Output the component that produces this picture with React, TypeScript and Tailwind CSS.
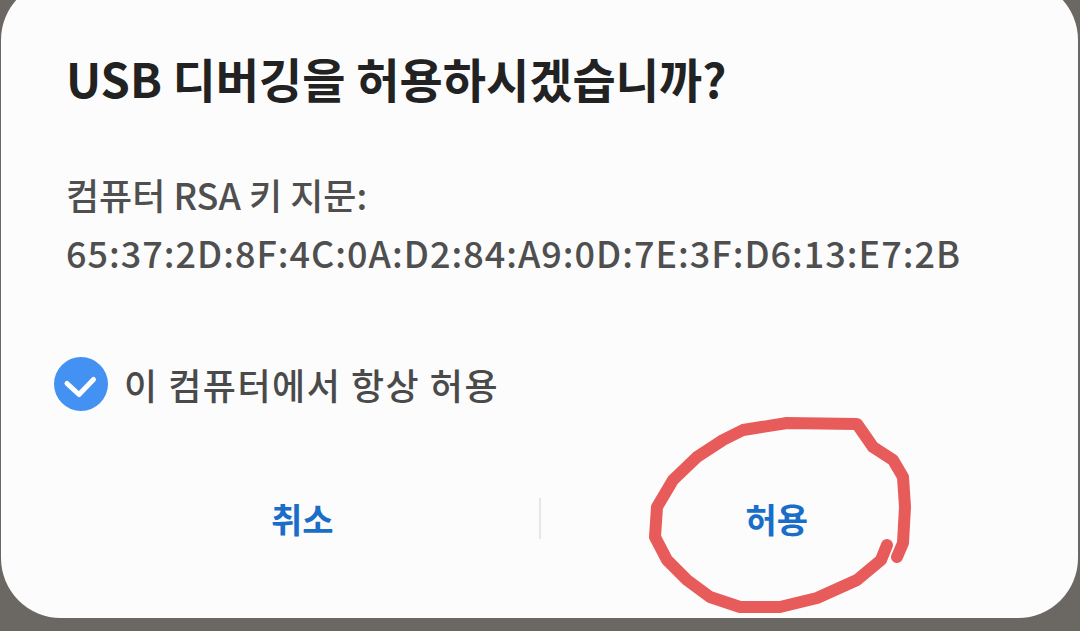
import React from "react";

const font = { fontFamily: '"Noto Sans CJK KR", "Noto Sans", sans-serif' };

function CheckCircle() {
  return (
    <svg width="54" height="54" viewBox="0 0 54 54">
      <circle cx="27" cy="27" r="27" fill="#4391f3" />
      <path d="M13 26.5l12 11 14.5-15" fill="none" stroke="#fff" strokeWidth="5" strokeLinecap="round" strokeLinejoin="round" />
    </svg>
  );
}

function Scribble() {
  return (
    <svg className="absolute left-0 top-0 pointer-events-none" width="1080" height="631" viewBox="0 0 1080 631">
      <path
        d="M887 545 L881 560 L857 580 L817 598 L780 607 L740 607 L710 597 L687 580 L667 560 L655 537 L657 507 L673 480 L697 457 L723 440 L743 430 L787 423 L857 424 L873 447 L893 460 L903 477 L905 507 L903 543 L897 557"
        fill="none"
        stroke="#e85b5b"
        strokeWidth="12"
        strokeLinecap="round"
        strokeLinejoin="round"
      />
    </svg>
  );
}

export default function App() {
  return (
    <div className="relative w-[1080px] h-[631px] overflow-hidden bg-[#6b6763]" style={font}>
      <div className="ml-[1px] mt-[-20px] w-[1077px] h-[638px] rounded-[60px] bg-[#fcfcfc] flex flex-col">
        <div className="pl-[65px] pt-[68px]">
          <h1 className="text-[47px] leading-[60px] font-bold text-[#222]">
            USB 디버깅을 허용하시겠습니까?
          </h1>
        </div>
        <div className="pl-[65px] pt-[57px] text-[36px] leading-[58px] font-medium text-[#4f4f4f]">
          <p>컴퓨터 RSA 키 지문:</p>
          <p className="tracking-[1px]">65:37:2D:8F:4C:0A:D2:84:A9:0D:7E:3F:D6:13:E7:2B</p>
        </div>
        <div className="pl-[53px] pt-[76px] flex items-center gap-[16px]">
          <CheckCircle />
          <span className="text-[36px] leading-[54px] font-medium text-[#4a4a4a] tracking-[1.5px]">
            이 컴퓨터에서 항상 허용
          </span>
        </div>
        <div className="mx-[65px] mt-[87px] flex items-center">
          <button className="flex-1 text-center text-[34px] leading-[41px] font-bold text-[#1a6ec8]">취소</button>
          <div className="w-[2px] h-[41px] bg-[#e6e6e6]" />
          <button className="flex-1 text-center text-[34px] leading-[41px] font-bold text-[#1a6ec8]">허용</button>
        </div>
      </div>
      <Scribble />
    </div>
  );
}
